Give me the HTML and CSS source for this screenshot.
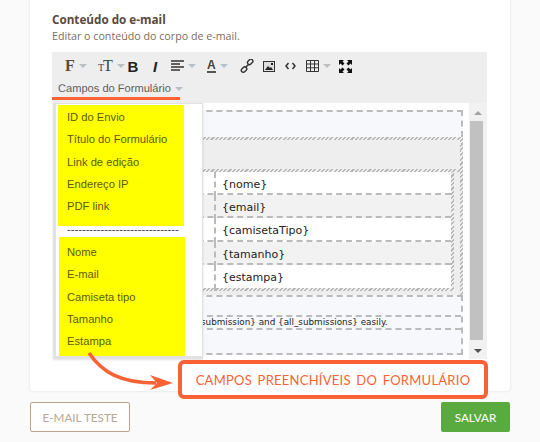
FILE: index.html
```html
<!DOCTYPE html>
<html lang="pt-BR">
<head>
  <meta charset="UTF-8" />
  <title>Conteúdo do e-mail</title>
  <link rel="stylesheet" href="styles.css">
</head>
<body>
  <div class="card">
    <h2 class="title">Conteúdo do e-mail</h2>
    <p class="subtitle">Editar o conteúdo do corpo de e-mail.</p>

    <div class="toolbar">
      <div class="tool-row">
        <span class="tool tool-font"><span class="glyph-f">F</span><i class="caret"></i></span>
        <span class="tool tool-size"><span class="glyph-t-small">T</span><span class="glyph-t">T</span><i class="caret"></i></span>
        <span class="tool"><span class="glyph-b">B</span></span>
        <span class="tool"><span class="glyph-i">I</span></span>
        <span class="tool tool-align">
          <svg width="13" height="12" viewBox="0 0 13 12"><path d="M0 1h13M0 4h9M0 7h13M0 10h9" stroke="#333" stroke-width="1.6"/></svg>
          <i class="caret"></i>
        </span>
        <span class="tool tool-color"><span class="glyph-a">A</span><i class="caret"></i></span>
        <span class="tool">
          <svg width="14" height="14" viewBox="0 0 14 14" fill="none" stroke="#333" stroke-width="1.4"><rect x="7.2" y="1" width="6" height="4" rx="2" transform="rotate(-45 10 3)"/><rect x="1" y="8.6" width="6" height="4" rx="2" transform="rotate(-45 4 10.6)"/><path d="M5.5 8.5l3-3"/></svg>
        </span>
        <span class="tool tool-narrow">
          <svg width="12" height="11" viewBox="0 0 12 11"><rect x=".5" y=".5" width="11" height="10" fill="#ddd" stroke="#333"/><path d="M2 9l3-4 2 2 1-1 2 3z" fill="#222"/><rect x="8" y="2" width="2" height="2" fill="#222"/></svg>
        </span>
        <span class="tool">
          <svg width="11" height="8" viewBox="0 0 11 8" fill="none" stroke="#333" stroke-width="1.5"><path d="M3.5 1L1 4l2.5 3M7.5 1L10 4 7.5 7"/></svg>
        </span>
        <span class="tool tool-table">
          <svg width="13" height="12" viewBox="0 0 13 12" fill="none" stroke="#333"><path d="M.5.5h12v11H.5zM.5 4h12M.5 7.800h12M4.500.5v11M8.500.5v11"/></svg>
          <i class="caret"></i>
        </span>
        <span class="tool">
          <svg width="13" height="13" viewBox="0 0 13 13" fill="#111"><path d="M0 0h5L3.500 1.500 5.500 3.500 3.500 5.500 1.500 3.500 0 5zM13 0v5L11.500 3.500 9.500 5.500 7.500 3.500 9.500 1.500 8 0zM0 13V8L1.500 9.500 3.500 7.500 5.500 9.500 3.500 11.500 5 13zM13 13H8L9.500 11.500 7.500 9.500 9.500 7.500 11.500 9.500 13 8z"/></svg>
        </span>
      </div>
      <div class="fields-btn">Campos do Formulário<i class="caret"></i></div>
    </div>

    <div class="editor">
      <div class="canvas">
        <div class="block block-top"></div>
        <div class="block-head"></div>
        <div class="block-table">
          <div class="rows">
            <div class="row"><span></span><span>{nome}</span></div>
            <div class="row"><span></span><span>{email}</span></div>
            <div class="row"><span></span><span>{camisetaTipo}</span></div>
            <div class="row"><span></span><span>{tamanho}</span></div>
            <div class="row"><span></span><span>{estampa}</span></div>
          </div>
        </div>
        <div class="block block-foot">
          <div class="foot-line">submission} and {all_submissions} easily.</div>
        </div>
      </div>
      <div class="scrollbar">
        <i class="arrow-up"></i>
        <div class="thumb"></div>
        <i class="arrow-down"></i>
      </div>

      <div class="dropdown">
        <ul class="marked">
          <li>ID do Envio</li>
          <li>Título do Formulário</li>
          <li>Link de edição</li>
          <li>Endereço IP</li>
          <li>PDF link</li>
        </ul>
        <div class="separator">------------------------------</div>
        <ul class="marked marked-second">
          <li>Nome</li>
          <li>E-mail</li>
          <li>Camiseta tipo</li>
          <li>Tamanho</li>
          <li>Estampa</li>
        </ul>
      </div>
    </div>
  </div>

  <div class="actions">
    <button class="btn-test">E-MAIL TESTE</button>
    <button class="btn-save">SALVAR</button>
  </div>

  <!-- annotation over the screenshot -->
  <svg class="arrow" width="100" height="50" viewBox="0 0 100 50" fill="none">
    <path d="M9 3C22 22 40 33 76 33" stroke="#f96234" stroke-width="3.500"/>
    <path d="M93 33L70 25L77 33L70 40Z" fill="#f96234"/>
  </svg>
  <div class="callout">CAMPOS PREENCHÍVEIS DO FORMULÁRIO</div>
</body>
</html>
```

FILE: styles.css
```css
* {
  box-sizing: border-box;
  margin: 0;
  padding: 0;
}

body {
  width: 540px;
  height: 442px;
  overflow: hidden;
  position: relative;
  background: #fbfafa;
  font-family: 'Liberation Sans', sans-serif;
}

.card {
  width: 480px;
  height: 391px;
  margin-left: 30px;
  padding: 12px 23px 0 22px;
  background: #fff;
  border-radius: 0 0 4px 4px;
  box-shadow: 0 0 3px rgba(0, 0, 0, 0.12);
}

.title {
  font-family: 'Open Sans', sans-serif;
  font-size: 11.7px;
  line-height: 14px;
  font-weight: 700;
  color: #5a4a3c;
}

.subtitle {
  margin-top: 3px;
  font-family: 'Open Sans', sans-serif;
  font-size: 10.7px;
  line-height: 14px;
  color: #7a6d60;
}

.toolbar {
  margin-top: 9px;
  height: 51px;
  background: #eee;
}

.tool-row {
  display: flex;
  align-items: center;
  height: 28px;
  padding: 0 0 0 10px;
}

.tool {
  width: 22px;
  height: 20px;
  display: flex;
  align-items: center;
  justify-content: center;
  flex-shrink: 0;
}

.tool-narrow {
  width: 21px;
}

.tool-font {
  width: 23px;
  margin-right: 9px;
  justify-content: flex-start;
  padding-left: 3px;
}

.tool-size {
  width: 28px;
  justify-content: flex-start;
  padding-left: 4px;
}

.tool-align {
  width: 35px;
  justify-content: flex-start;
  padding-left: 5px;
}

.tool-color {
  width: 35px;
  justify-content: flex-start;
  padding-left: 6px;
}

.tool-table {
  width: 33px;
  justify-content: flex-start;
  padding-left: 5px;
}

.caret {
  display: inline-block;
  width: 0;
  height: 0;
  margin-left: 4px;
  border-left: 4px solid transparent;
  border-right: 4px solid transparent;
  border-top: 4px solid #b8bfc6;
}

.glyph-f,
.glyph-t,
.glyph-t-small {
  font-family: 'Liberation Serif', serif;
  font-weight: 700;
  color: #5a4a3c;
}

.glyph-f {
  font-size: 16px;
}

.glyph-t {
  font-size: 16px;
  font-weight: 400;
  margin-left: -1px;
  color: #444;
}

.glyph-t-small {
  font-size: 10px;
  font-weight: 400;
  color: #444;
  margin-top: 3px;
}

.glyph-b,
.glyph-i,
.glyph-a {
  font-weight: 700;
  font-size: 15px;
  color: #222;
}

.glyph-i {
  font-style: italic;
}

.glyph-a {
  font-size: 12px;
  color: #444;
  border-bottom: 2px solid #555;
  line-height: 12px;
}

.fields-btn {
  display: flex;
  align-items: center;
  width: 128px;
  height: 20px;
  padding-left: 6px;
  font-size: 11.1px;
  text-rendering: geometricPrecision;
  color: #5d5d5d;
  border-bottom: 3px solid #f96234;
  white-space: nowrap;
}

.editor {
  position: relative;
  display: flex;
  height: 256px;
  background: #fff;
}

.canvas {
  flex: 1;
  padding: 7px 6px 0 4px;
}

.block {
  border: 2px dashed #bbb;
  border-bottom: 0;
}

.block-top {
  height: 27px;
  background: #f7f8fc;
}

/* overlapping dashed outlines in the editor read as a hatched band */
.block-head,
.block-table {
  border-style: solid;
  border-width: 3px 3px 0 3px;
  border-image: repeating-linear-gradient(135deg, #b8b8b8 0 1.5px, #eee 1.5px 3px) 3;
  background: #eee;
}

.block-head {
  height: 32px;
}

.block-table {
  height: 126px;
  padding-right: 6px;
}

.rows {
  height: 119px;
  border-style: solid;
  border-width: 0 3px 3px 0;
  border-image: repeating-linear-gradient(135deg, #b8b8b8 0 1.5px, #eee 1.5px 3px) 3;
}

.row {
  display: grid;
  grid-template-columns: 155px 1fr;
  height: 23.2px;
  background: #fff;
  border-bottom: 2px dashed #bbb;
  font-family: 'DejaVu Sans', sans-serif;
  font-size: 11px;
  line-height: 25px;
  color: #222;
}

.row:nth-child(even) {
  background: #f2f2f2;
}

.row:last-child {
  border-bottom: 0;
}

.row span:last-child {
  padding-left: 6px;
  border-left: 2px dashed #bbb;
}

.block-foot {
  height: 60px;
  padding-top: 18px;
  background: #f7f8fc;
  border-bottom: 2px dashed #bbb;
}

.foot-line {
  height: 15px;
  padding-left: 143px;
  border-top: 2px dashed #bbb;
  border-bottom: 2px dashed #bbb;
  font-family: 'DejaVu Sans', sans-serif;
  font-size: 8.8px;
  line-height: 11px;
  color: #222;
  white-space: nowrap;
}

.scrollbar {
  width: 18px;
  display: flex;
  flex-direction: column;
  align-items: center;
  padding: 8px 0 6px;
  background: #f1f1f1;
}

.thumb {
  flex: 1;
  width: 13px;
  margin: 6px 0 9px -3px;
  background: #c1c1c1;
}

.arrow-up,
.arrow-down {
  width: 0;
  height: 0;
  border-left: 4px solid transparent;
  border-right: 4px solid transparent;
}

.arrow-up {
  border-bottom: 4px solid #a3a3a3;
}

.arrow-down {
  border-top: 4px solid #505050;
}

.dropdown {
  position: absolute;
  left: 1px;
  top: 0;
  width: 150px;
  height: 256px;
  padding: 1px 0 0 2px;
  background: #fff;
  border: 1px solid #e2e2e2;
  border-bottom-width: 3px;
  border-left-width: 3px;
  box-shadow: 0 1px 2px rgba(0, 0, 0, 0.12);
}

.marked {
  width: 126px;
  list-style: none;
  padding: 1px 0 8.5px 9px;
  background: #ff0;
  font-size: 11.2px;
  line-height: 22.3px;
  color: #5c5c00;
}

.marked-second {
  padding: 4px 0 3.5px 8px;
  margin-left: 1px;
}

.separator {
  height: 11px;
  padding-left: 9px;
  font-size: 11.2px;
  line-height: 7px;
  color: #444;
  white-space: nowrap;
}

.actions {
  display: flex;
  justify-content: space-between;
  width: 480px;
  margin: 11px 0 0 30px;
}

.btn-test,
.btn-save {
  height: 30px;
  font-family: 'Lato', sans-serif;
  font-size: 11.7px;
  border-radius: 2px;
  cursor: pointer;
}

.btn-test {
  width: 100px;
  background: #fff;
  border: 1px solid #b9a38a;
  color: #b9a994;
}

.btn-save {
  width: 69px;
  background: #5aab3f;
  border: 0;
  color: #fff;
}

.arrow {
  position: absolute;
  left: 80px;
  top: 350px;
}

.callout {
  position: absolute;
  left: 178px;
  top: 360px;
  width: 310px;
  height: 39px;
  background: #fff;
  border: 4px solid #f96234;
  border-radius: 6px;
  font-family: 'Lato', sans-serif;
  font-size: 13px;
  line-height: 32px;
  letter-spacing: 0.25px;
  word-spacing: 2px;
  text-align: center;
  color: #f96234;
  white-space: nowrap;
}
```
